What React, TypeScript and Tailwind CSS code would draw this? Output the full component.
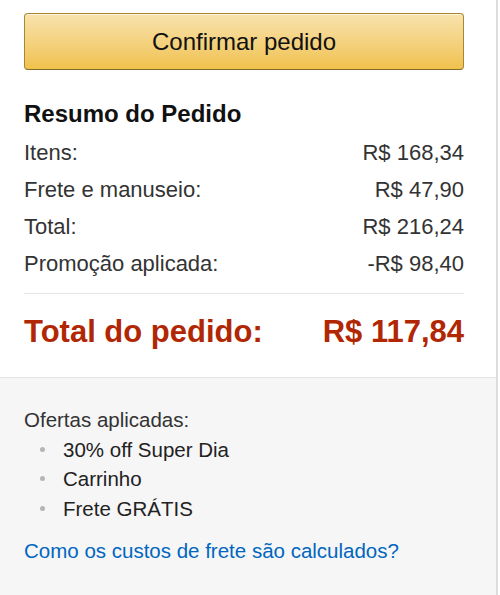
const rows = [
  { label: 'Itens:', value: 'R$ 168,34' },
  { label: 'Frete e manuseio:', value: 'R$ 47,90' },
  { label: 'Total:', value: 'R$ 216,24' },
  { label: 'Promoção aplicada:', value: '-R$ 98,40' },
];

const offers = ['30% off Super Dia', 'Carrinho', 'Frete GRÁTIS'];

export default function App() {
  return (
    <div className="w-[498px] h-[595px] bg-white border-r-[2px] border-[#dddddd] font-['Liberation_Sans',Arial,sans-serif] text-[#111111] flex flex-col">
      <div className="pl-6 pr-8 pt-[13px] pb-[25px] border-b border-[#e3e3e3]">
        <button className="w-[440px] h-[57px] rounded-[4px] border border-[#a88734] border-b-[#846a29] bg-gradient-to-b from-[#f8e3ac] to-[#f0c14b] shadow-[inset_0_1px_0_rgba(255,255,255,0.6)] text-[24px] text-[#111111] leading-none">
          Confirmar pedido
        </button>

        <h3 className="mt-[30px] text-[24px] font-bold leading-[28px] text-[#111111]">Resumo do Pedido</h3>

        <div className="mt-[6px]">
          {rows.map((r) => (
            <div key={r.label} className="flex justify-between text-[22px] leading-[37px] text-[#333333]">
              <span>{r.label}</span>
              <span>{r.value}</span>
            </div>
          ))}
        </div>

        <div className="mt-[11px] border-t border-[#e7e7e7]" />

        <div className="mt-[18px] flex justify-between text-[31px] font-bold leading-[40px] text-[#b12704]">
          <span>Total do pedido:</span>
          <span>R$ 117,84</span>
        </div>
      </div>

      <div className="flex-1 bg-[#f6f6f6] px-6 pt-[27px] text-[20.5px] leading-[29.5px]">
        <p className="text-[#333333]">Ofertas aplicadas:</p>
        <ul>
          {offers.map((o) => (
            <li key={o} className="flex items-center text-[#222222]">
              <span className="w-[39px] flex justify-center pr-[2px]">
                <span className="w-[5px] h-[5px] rounded-full bg-[#b5b5b5]" />
              </span>
              <span>{o}</span>
            </li>
          ))}
        </ul>
        <a href="#" className="block mt-[13px] text-[#0066c0]">
          Como os custos de frete são calculados?
        </a>
      </div>
    </div>
  );
}
